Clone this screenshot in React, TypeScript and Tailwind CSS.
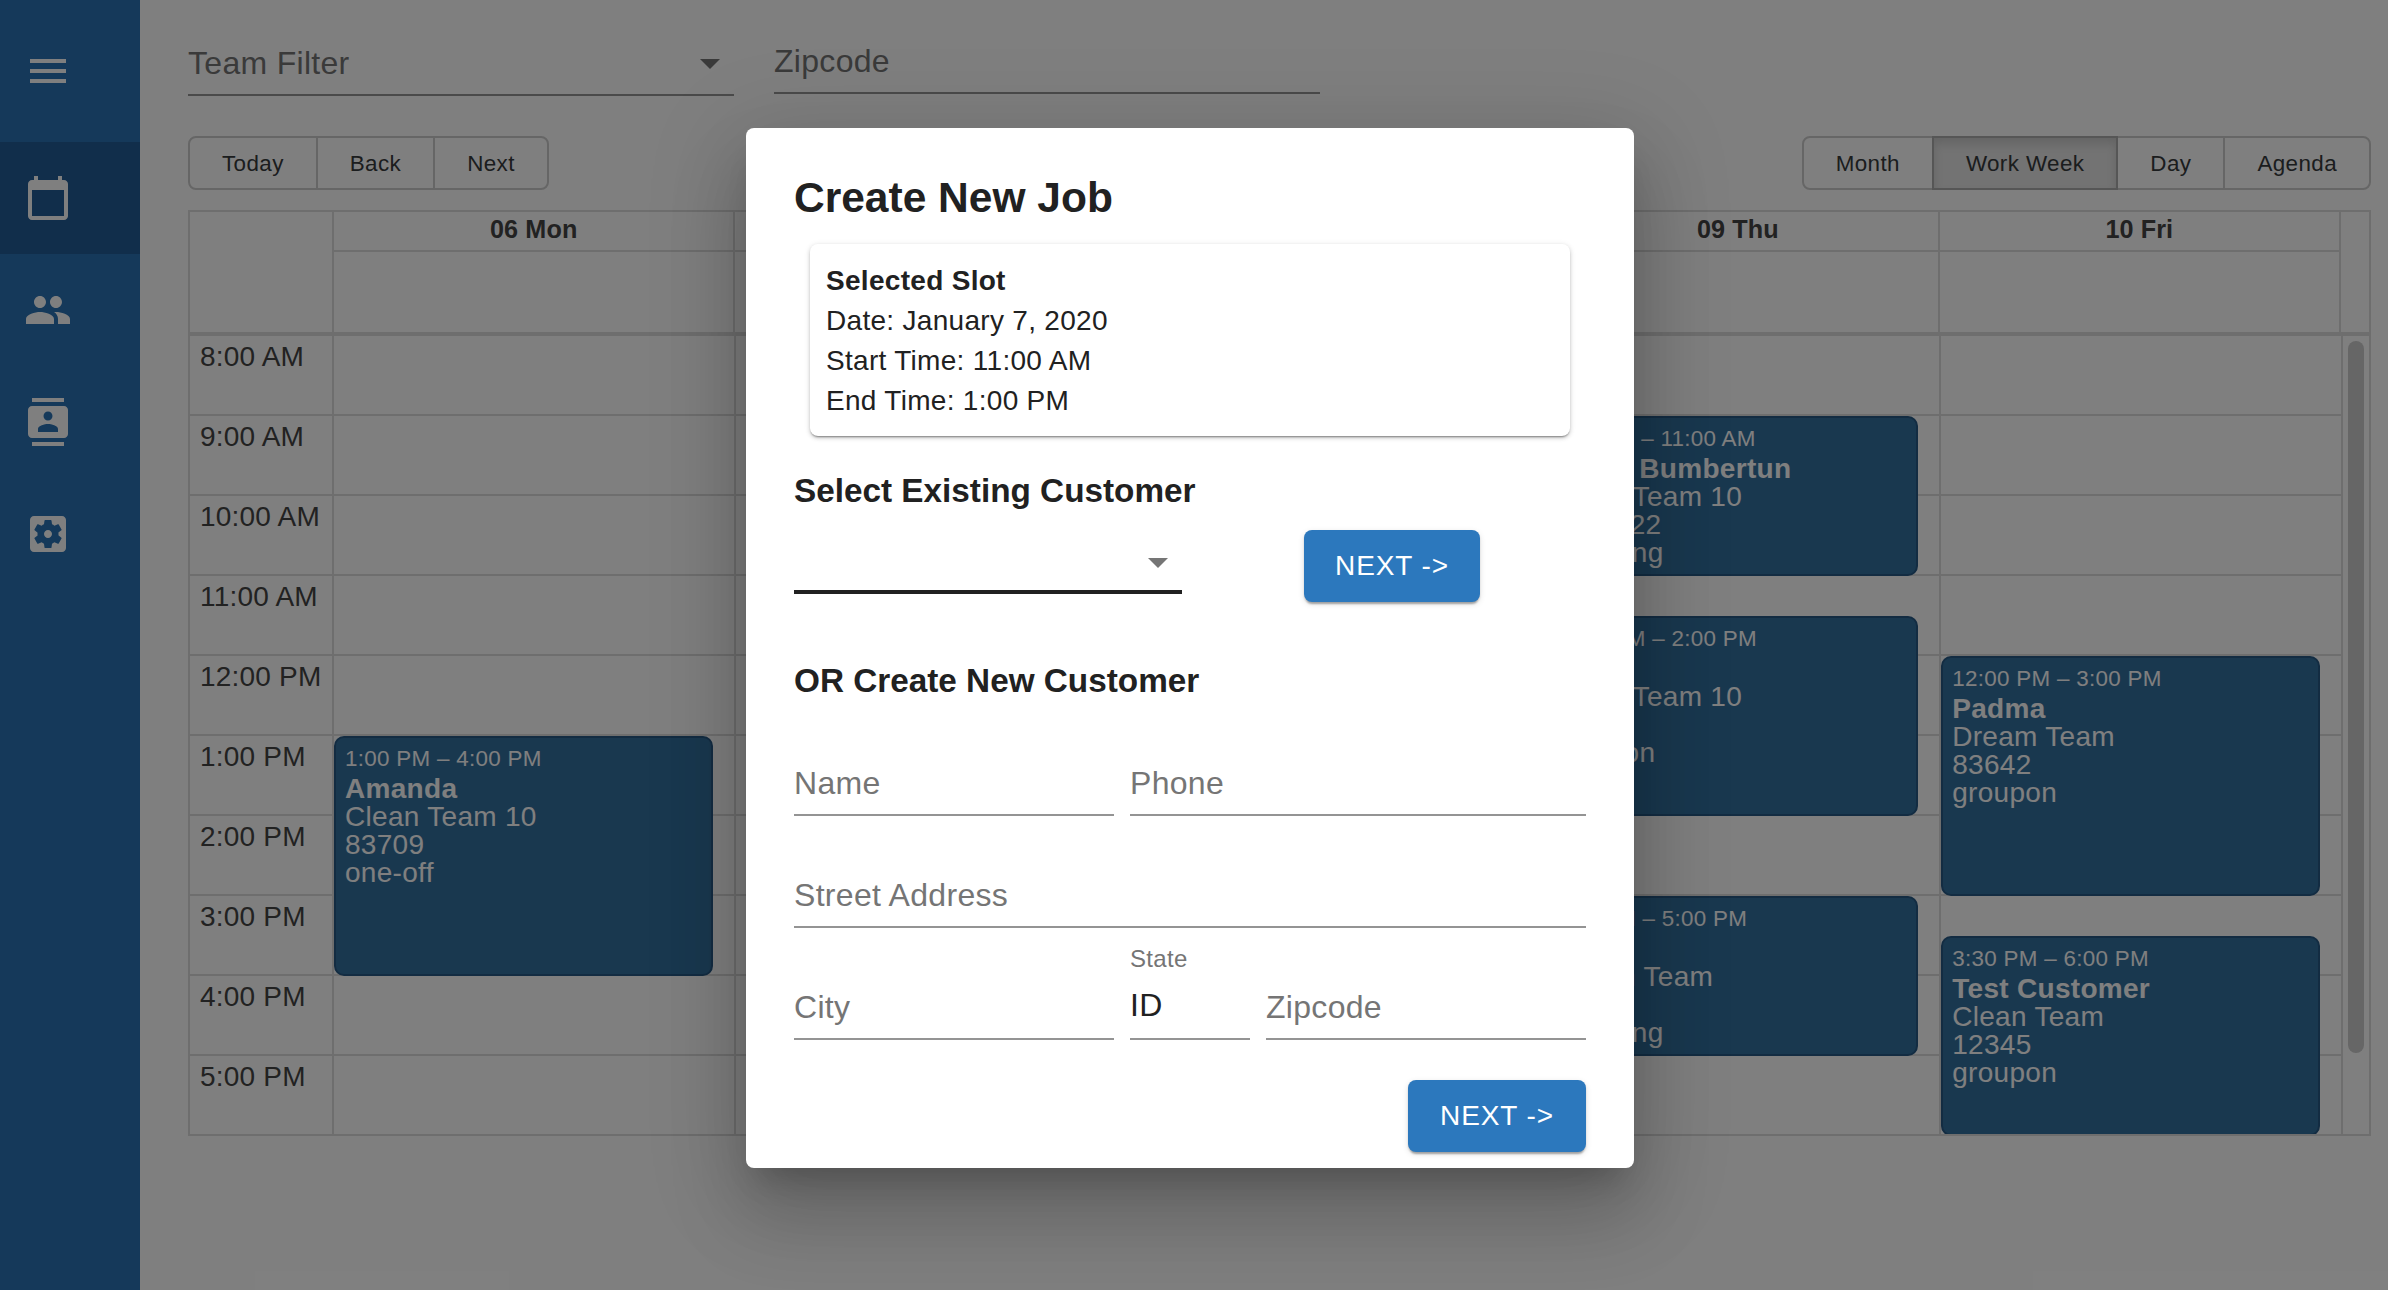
import type { ReactNode } from "react";

const hours = ["8:00 AM", "9:00 AM", "10:00 AM", "11:00 AM", "12:00 PM", "1:00 PM", "2:00 PM", "3:00 PM", "4:00 PM", "5:00 PM"];
const days = ["06 Mon", "07 Tue", "08 Wed", "09 Thu", "10 Fri"];

type CalEvent = { top: number; height: number; time: string; name: string; team: string; zip: string; source: string };

const events: Record<string, CalEvent[]> = {
  "06 Mon": [{ top: 400, height: 240, time: "1:00 PM – 4:00 PM", name: "Amanda", team: "Clean Team 10", zip: "83709", source: "one-off" }],
  "09 Thu": [
    { top: 80, height: 160, time: "9:00 AM – 11:00 AM", name: "Bryan Bumbertun", team: "Clean Team 10", zip: "8370922", source: "recurring" },
    { top: 280, height: 200, time: "11:30 AM – 2:00 PM", name: "Mia", team: "Clean Team 10", zip: "83702", source: "groupon" },
    { top: 560, height: 160, time: "3:00 PM – 5:00 PM", name: "Sam", team: "Dream Team", zip: "83704", source: "recurring" },
  ],
  "10 Fri": [
    { top: 320, height: 240, time: "12:00 PM – 3:00 PM", name: "Padma", team: "Dream Team", zip: "83642", source: "groupon" },
    { top: 600, height: 200, time: "3:30 PM – 6:00 PM", name: "Test Customer", team: "Clean Team", zip: "12345", source: "groupon" },
  ],
};

const navIcons = [
  "M20 3h-1V1h-2v2H7V1H5v2H4c-1.1 0-2 .9-2 2v16c0 1.1.9 2 2 2h16c1.1 0 2-.9 2-2V5c0-1.1-.9-2-2-2zm0 18H4V8h16v13z",
  "M16 11c1.66 0 2.99-1.34 2.99-3S17.66 5 16 5c-1.66 0-3 1.34-3 3s1.34 3 3 3zm-8 0c1.66 0 2.99-1.34 2.99-3S9.66 5 8 5C6.34 5 5 6.34 5 8s1.34 3 3 3zm0 2c-2.33 0-7 1.17-7 3.5V19h14v-2.5c0-2.33-4.67-3.5-7-3.5zm8 0c-.29 0-.62.02-.97.05 1.16.84 1.97 1.97 1.97 3.45V19h6v-2.5c0-2.33-4.67-3.5-7-3.5z",
  "M20 0H4v2h16V0zM4 24h16v-2H4v2zM20 4H4c-1.1 0-2 .9-2 2v12c0 1.1.9 2 2 2h16c1.1 0 2-.9 2-2V6c0-1.1-.9-2-2-2zm-8 2.75c1.24 0 2.25 1.01 2.25 2.25s-1.01 2.25-2.25 2.25S9.75 10.24 9.75 9 10.76 6.75 12 6.75zM17 17H7v-1.5c0-1.67 3.33-2.5 5-2.5s5 .83 5 2.5V17z",
  "M12 10c-1.1 0-2 .9-2 2s.9 2 2 2 2-.9 2-2-.9-2-2-2zm7-7H5c-1.11 0-2 .9-2 2v14c0 1.1.89 2 2 2h14c1.11 0 2-.9 2-2V5c0-1.1-.89-2-2-2zm-1.75 9c0 .23-.02.46-.05.68l1.48 1.16c.13.11.17.3.08.45l-1.4 2.42c-.09.15-.27.21-.43.15l-1.74-.7c-.36.28-.76.51-1.18.69l-.26 1.85c-.03.17-.18.3-.35.3h-2.8c-.17 0-.32-.13-.35-.29l-.26-1.85c-.43-.18-.82-.41-1.18-.69l-1.74.7c-.16.06-.34 0-.43-.15l-1.4-2.42c-.09-.15-.05-.34.08-.45l1.48-1.16c-.03-.23-.05-.46-.05-.69 0-.23.02-.46.05-.68l-1.48-1.16c-.13-.11-.17-.3-.08-.45l1.4-2.42c.09-.15.27-.21.43-.15l1.74.7c.36-.28.76-.51 1.18-.69l.26-1.85c.03-.17.18-.3.35-.3h2.8c.17 0 .32.13.35.29l.26 1.85c.43.18.82.41 1.18.69l1.74-.7c.16-.06.34 0 .43.15l1.4 2.42c.09.15.05.34-.08.45l-1.48 1.16c.03.23.05.46.05.69z",
];

function Arrow({ className }: { className: string }) {
  return (
    <svg viewBox="0 0 24 24" className={className} fill="currentColor">
      <path d="M7 10l5 5 5-5z" />
    </svg>
  );
}

function NavIcon({ d }: { d: string }) {
  return (
    <svg viewBox="0 0 24 24" className="h-[48px] w-[48px] text-white" fill="currentColor">
      <path d={d} />
    </svg>
  );
}

function Sidebar() {
  return (
    <aside className="w-[140px] shrink-0 bg-[#2b73b4]">
      <div className="flex h-[142px] items-center pl-[24px]">
        <NavIcon d="M3 18h18v-2H3v2zm0-5h18v-2H3v2zm0-7v2h18V6H3z" />
      </div>
      {navIcons.map((d, i) => (
        <div key={i} className={`flex h-[112px] items-center pl-[24px] ${i === 0 ? "bg-[#225c96]" : ""}`}>
          <NavIcon d={d} />
        </div>
      ))}
    </aside>
  );
}

function ToolButton({ label, active, first }: { label: string; active?: boolean; first?: boolean }) {
  return (
    <button
      className={`h-[54px] border-2 px-[32px] pt-[2px] text-[22.4px] tracking-[0.4px] text-[#373a3c] ${first ? "" : "-ml-[2px]"} ${
        active ? "relative z-10 border-[#adadad] bg-[#e6e6e6] shadow-[inset_0_6px_10px_rgba(0,0,0,0.125)]" : "border-[#ccc]"
      } first:rounded-l-[8px] last:rounded-r-[8px]`}
    >
      {label}
    </button>
  );
}

function Event({ event }: { event: CalEvent }) {
  return (
    <div
      className="absolute left-0 right-[21px] overflow-hidden rounded-[10px] border-2 border-[#265985] bg-[#33709f] pt-[5px] pr-[10px] pb-[4px] pl-[9px] text-[28px] leading-[28px] tracking-[0.3px] whitespace-nowrap text-white"
      style={{ top: event.top, height: event.height }}
    >
      <div className="text-[22.4px] leading-[32px]">{event.time}</div>
      <div className="font-bold">{event.name}</div>
      <div>{event.team}</div>
      <div>{event.zip}</div>
      <div>{event.source}</div>
    </div>
  );
}

function Calendar() {
  return (
    <div className="mt-[20px] flex h-[926px] flex-col border-2 border-[#ddd]">
      <div className="grid h-[124px] shrink-0 grid-cols-[142px_repeat(5,1fr)_30px] border-b-4 border-[#ddd]">
        <div />
        {days.map((day) => (
          <div key={day} className="border-l-2 border-[#ddd]">
            <div className="flex h-[40px] items-center justify-center border-b-2 border-[#ddd] pb-[2px] text-[25.2px] font-bold tracking-[0.1px] text-[#444]">{day}</div>
          </div>
        ))}
        <div className="border-l-2 border-[#ddd]" />
      </div>
      <div className="grid min-h-0 flex-1 grid-cols-[142px_repeat(5,1fr)_28px] overflow-hidden">
        <div>
          {hours.map((h) => (
            <div key={h} className="h-[80px] border-b-2 border-[#ddd] px-[10px] pt-[5px] text-[28px] leading-[32px] tracking-[0.2px] text-[#444] last:border-b-0">
              {h}
            </div>
          ))}
        </div>
        {days.map((day) => (
          <div key={day} className="relative border-l-2 border-[#ddd]">
            {hours.map((h) => (
              <div key={h} className="h-[80px] border-b-2 border-[#ddd] last:border-b-0" />
            ))}
            {(events[day] ?? []).map((e) => (
              <Event key={e.time} event={e} />
            ))}
          </div>
        ))}
        <div className="border-l-2 border-[#ddd] pt-[5px] pl-[5px]">
          <div className="h-[712px] w-[16px] rounded-full bg-[#ccc]" />
        </div>
      </div>
    </div>
  );
}

function Field({ label, className, children }: { label?: string; className: string; children?: ReactNode }) {
  return (
    <div className={`flex h-[64px] items-center border-b-2 border-[#949494] text-[32px] tracking-[0.3px] text-[#757575] ${className}`}>
      {label}
      {children}
    </div>
  );
}

function NextButton({ className }: { className: string }) {
  return (
    <button
      className={`h-[72px] rounded-[8px] bg-[#2c78bd] text-[28px] tracking-[0.9px] text-white shadow-[0_2px_2px_rgba(0,0,0,0.14),0_4px_2px_-2px_rgba(0,0,0,0.2),0_2px_6px_rgba(0,0,0,0.12)] ${className}`}
    >
      NEXT -&gt;
    </button>
  );
}

function JobModal() {
  return (
    <div className="absolute top-[128px] left-[746px] z-30 flex w-[888px] flex-col rounded-[8px] bg-white px-[48px] pt-[40px] pb-[16px] text-[#212121] shadow-[0_22px_30px_-14px_rgba(0,0,0,0.2),0_48px_76px_6px_rgba(0,0,0,0.14),0_18px_92px_16px_rgba(0,0,0,0.12)]">
      <h2 className="h-[60px] text-[42.5px] leading-[60px] font-bold">Create New Job</h2>
      <div className="mx-[16px] mt-[16px] h-[192px] rounded-[8px] px-[16px] pt-[17px] text-[28px] leading-[40px] tracking-[0.3px] shadow-[0_2px_2px_-1px_rgba(0,0,0,0.4),0_2px_4px_rgba(0,0,0,0.14),0_1px_6px_rgba(0,0,0,0.1)]">
        <div className="font-bold">Selected Slot</div>
        <div>Date: January 7, 2020</div>
        <div>Start Time: 11:00 AM</div>
        <div>End Time: 1:00 PM</div>
      </div>

      <h3 className="mt-[31px] h-[48px] text-[33.3px] leading-[48px] font-bold">Select Existing Customer</h3>
      <div className="mt-[15px] flex h-[72px] items-start">
        <div className="flex h-[64px] w-[388px] items-center justify-end border-b-4 border-[#212121] pt-[4px] text-[#757575]">
          <Arrow className="h-[48px] w-[48px]" />
        </div>
        <NextButton className="ml-[122px] w-[176px]" />
      </div>

      <h3 className="mt-[55px] h-[48px] text-[33.3px] leading-[48px] font-bold">OR Create New Customer</h3>
      <div className="mt-[47px] flex gap-[16px]">
        <Field label="Name" className="w-[320px]" />
        <Field label="Phone" className="flex-1" />
      </div>
      <Field label="Street Address" className="mt-[48px]" />
      <div className="mt-[48px] flex gap-[16px]">
        <Field label="City" className="w-[320px]" />
        <Field className="relative w-[120px] pb-[4px]">
          <span className="absolute -top-[31px] left-0 text-[24px] leading-[28px] text-[#757575]">State</span>
          <span className="text-[#212121]">ID</span>
        </Field>
        <Field label="Zipcode" className="w-[320px]" />
      </div>
      <NextButton className="mt-[40px] w-[178px] self-end" />
    </div>
  );
}

export default function App() {
  return (
    <div className="relative flex h-[1290px] w-[2388px] overflow-hidden bg-white font-['Liberation_Sans',Arial,sans-serif]">
      <Sidebar />
      <main className="w-[2231px] pl-[48px]">
        <div className="flex h-[96px] items-start">
          <div className="mt-[40px] flex h-[56px] w-[546px] items-center justify-between border-b-2 border-[#949494] pb-[8px] text-[32px] tracking-[0.3px] text-[#757575]">
            Team Filter
            <Arrow className="h-[48px] w-[48px]" />
          </div>
          <div className="mt-[38px] ml-[40px] flex h-[56px] w-[546px] items-center border-b-2 border-[#949494] pb-[8px] text-[32px] tracking-[0.3px] text-[#757575]">
            Zipcode
          </div>
        </div>
        <div className="mt-[40px] flex justify-between">
          <div className="flex">
            <ToolButton first label="Today" />
            <ToolButton label="Back" />
            <ToolButton label="Next" />
          </div>
          <div className="flex">
            <ToolButton first label="Month" />
            <ToolButton active label="Work Week" />
            <ToolButton label="Day" />
            <ToolButton label="Agenda" />
          </div>
        </div>
        <Calendar />
      </main>
      <div className="absolute inset-0 z-20 bg-black/50" />
      <JobModal />
    </div>
  );
}
